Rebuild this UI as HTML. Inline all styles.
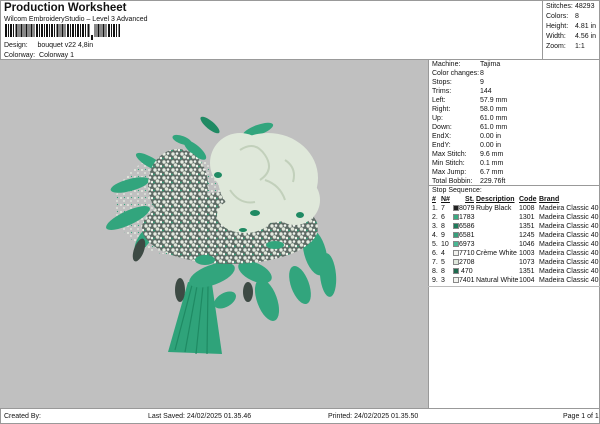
<!DOCTYPE html>
<html><head><meta charset="utf-8"><style>
*{margin:0;padding:0;box-sizing:border-box}
body{width:600px;height:424px;background:#fff;font-family:"Liberation Sans",sans-serif;font-size:7px;color:#111;position:relative;overflow:hidden}
.a{position:absolute;white-space:nowrap;line-height:8px}
.t{font-weight:bold;font-size:11.5px;line-height:13px}
.bc{position:absolute;left:5px;top:24px;width:115px;height:13px;background:repeating-linear-gradient(90deg,#111 0 2px,#fff 2px 3px,#111 3px 4px,#fff 4px 5px,#111 5px 7px,#fff 7px 8px,#111 8px 9px,#fff 9px 10.3px)}
.sw{display:inline-block;width:6px;height:6px;border:1px solid #888;vertical-align:-1px}
table{border-collapse:collapse}
td{padding:0;height:9px;line-height:9px;font-size:7px;white-space:nowrap}
</style></head><body>
<div style="position:absolute;left:0;top:0;width:600px;height:424px;border:1px solid #999"></div>
<div class="a t" style="left:4px;top:2px">Production Worksheet</div>
<div class="a" style="left:4px;top:16px">Wilcom EmbroideryStudio – Level 3 Advanced</div>
<div class="bc"></div>
<div style="position:absolute;left:90px;top:24px;width:4px;height:15px;background:#fff"></div>
<div style="position:absolute;left:91px;top:35px;width:1.5px;height:5px;background:#111"></div>
<div class="a" style="left:4px;top:42px">Design:&nbsp;&nbsp;&nbsp;&nbsp;&nbsp;bouquet v22 4,8in</div>
<div class="a" style="left:4px;top:52px">Colorway:&nbsp;&nbsp;Colorway 1</div>
<div style="position:absolute;left:542px;top:0;width:1px;height:59px;background:#999"></div>
<div class="a" style="left:546px;top:2px;line-height:10px">Stitches:<br>Colors:<br>Height:<br>Width:<br>Zoom:</div>
<div class="a" style="left:575px;top:2px;line-height:10px">48293<br>8<br>4.81 in<br>4.56 in<br>1:1</div>
<div style="position:absolute;left:0;top:59px;width:600px;height:1px;background:#999"></div>
<div style="position:absolute;left:0;top:60px;width:428px;height:348px;background:#c0c0c0"></div>
<div style="position:absolute;left:428px;top:59px;width:1px;height:349px;background:#999"></div>
<div class="a" style="left:432px;top:60px;line-height:9px">Machine:<br>Color changes:<br>Stops:<br>Trims:<br>Left:<br>Right:<br>Up:<br>Down:<br>EndX:<br>EndY:<br>Max Stitch:<br>Min Stitch:<br>Max Jump:<br>Total Bobbin:</div>
<div class="a" style="left:480px;top:60px;line-height:9px">Tajima<br>8<br>9<br>144<br>57.9 mm<br>58.0 mm<br>61.0 mm<br>61.0 mm<br>0.00 in<br>0.00 in<br>9.6 mm<br>0.1 mm<br>6.7 mm<br>229.76ft</div>
<div style="position:absolute;left:428px;top:185px;width:172px;height:1px;background:#999"></div>
<div class="a" style="left:432px;top:187px">Stop Sequence:</div>
<table style="position:absolute;left:432px;top:195px">
<tr><td style="width:9px;text-decoration:underline;font-weight:bold">#</td><td style="width:12px;text-decoration:underline;font-weight:bold">N#</td><td style="width:23px;text-align:right;padding-right:2px;text-decoration:underline;font-weight:bold">St.</td><td style="width:43px;text-decoration:underline;font-weight:bold">Description</td><td style="width:20px;text-decoration:underline;font-weight:bold">Code</td><td style="text-decoration:underline;font-weight:bold">Brand</td></tr>
<tr><td>1.</td><td>7</td><td><span class="sw" style="background:#222"></span>8079</td><td>Ruby Black</td><td>1008</td><td>Madeira Classic 40</td></tr>
<tr><td>2.</td><td>6</td><td><span class="sw" style="background:#3aaa82"></span>1783</td><td></td><td>1301</td><td>Madeira Classic 40</td></tr>
<tr><td>3.</td><td>8</td><td><span class="sw" style="background:#1e7a5a"></span>6586</td><td></td><td>1351</td><td>Madeira Classic 40</td></tr>
<tr><td>4.</td><td>9</td><td><span class="sw" style="background:#38a07c"></span>6581</td><td></td><td>1245</td><td>Madeira Classic 40</td></tr>
<tr><td>5.</td><td>10</td><td><span class="sw" style="background:#4ab894"></span>6973</td><td></td><td>1046</td><td>Madeira Classic 40</td></tr>
<tr><td>6.</td><td>4</td><td><span class="sw" style="background:#f2f2ee"></span>7710</td><td>Crème White</td><td>1003</td><td>Madeira Classic 40</td></tr>
<tr><td>7.</td><td>5</td><td><span class="sw" style="background:#dfe8dc"></span>2708</td><td></td><td>1073</td><td>Madeira Classic 40</td></tr>
<tr><td>8.</td><td>8</td><td><span class="sw" style="background:#1e6a4e"></span>&nbsp;470</td><td></td><td>1351</td><td>Madeira Classic 40</td></tr>
<tr><td>9.</td><td>3</td><td><span class="sw" style="background:#f4f4f0"></span>7401</td><td>Natural White</td><td>1004</td><td>Madeira Classic 40</td></tr>
</table>
<div style="position:absolute;left:428px;top:286px;width:172px;height:1px;background:#bbb"></div>
<div style="position:absolute;left:0;top:408px;width:600px;height:1px;background:#999"></div>
<div class="a" style="left:4px;top:413px">Created By:</div>
<div class="a" style="left:148px;top:413px">Last Saved: 24/02/2025 01.35.46</div>
<div class="a" style="left:328px;top:413px">Printed: 24/02/2025 01.35.50</div>
<div class="a" style="left:563px;top:413px">Page 1 of 1</div>
<svg style="position:absolute;left:0;top:0" width="428" height="408">
<defs>
<pattern id="sp" width="9" height="8" patternUnits="userSpaceOnUse">
<rect width="9" height="8" fill="#5e6b65"/>
<circle cx="2" cy="2" r="1.7" fill="#e6ece2"/><circle cx="6" cy="1.5" r="1.3" fill="#f0f3ee"/>
<circle cx="4.5" cy="5" r="1.8" fill="#dfe6da"/><circle cx="8" cy="6" r="1.3" fill="#eef2ea"/>
<circle cx="1" cy="6.5" r="0.9" fill="#2fa37a"/>
</pattern>
<pattern id="sp2" width="7" height="7" patternUnits="userSpaceOnUse">
<circle cx="2" cy="2" r="1" fill="#e6ece2"/><circle cx="5" cy="5" r="0.9" fill="#e6ece2"/><circle cx="5.5" cy="1.5" r="0.6" fill="#2fa37a"/>
</pattern>
</defs>
<ellipse cx="175" cy="205" rx="60" ry="50" fill="url(#sp2)"/>
<g fill="#32a57d">
<path d="M168 352 L188 282 L212 284 L222 354 Z" fill="#2fa37a"/>
<path d="M175 350 L192 285 M185 352 L197 286 M196 354 L203 286 M207 354 L208 286" stroke="#1f8a63" stroke-width="1.2"/>
<ellipse cx="128" cy="218" rx="24" ry="7" transform="rotate(-25 128 218)"/>
<ellipse cx="130" cy="185" rx="20" ry="6" transform="rotate(-15 130 185)"/>
<ellipse cx="150" cy="162" rx="16" ry="5" transform="rotate(30 150 162)"/>
<ellipse cx="145" cy="238" rx="16" ry="6" transform="rotate(-55 145 238)"/>
<ellipse cx="158" cy="225" rx="10" ry="16" transform="rotate(15 158 225)"/>
<ellipse cx="315" cy="252" rx="11" ry="24" transform="rotate(-15 315 252)"/>
<ellipse cx="328" cy="275" rx="8" ry="22" transform="rotate(-5 328 275)"/>
<ellipse cx="300" cy="285" rx="9" ry="20" transform="rotate(-20 300 285)"/>
<ellipse cx="267" cy="300" rx="10" ry="22" transform="rotate(-20 267 300)"/>
<ellipse cx="255" cy="272" rx="18" ry="9" transform="rotate(25 255 272)"/>
<ellipse cx="212" cy="275" rx="24" ry="10" transform="rotate(-20 212 275)"/>
<ellipse cx="225" cy="300" rx="12" ry="7" transform="rotate(-30 225 300)"/>
<ellipse cx="195" cy="150" rx="14" ry="5" transform="rotate(40 195 150)"/>
<ellipse cx="210" cy="125" rx="12" ry="4" transform="rotate(40 210 125)" fill="#1f8a63"/>
<ellipse cx="258" cy="130" rx="16" ry="5" transform="rotate(-20 258 130)"/>
<ellipse cx="182" cy="140" rx="10" ry="4" transform="rotate(20 182 140)"/>
</g>
<g fill="#3d4a44">
<ellipse cx="139" cy="250" rx="5" ry="12" transform="rotate(20 139 250)"/>
<ellipse cx="180" cy="290" rx="5" ry="12"/>
<ellipse cx="248" cy="292" rx="5" ry="10"/>
</g>
<ellipse cx="230" cy="228" rx="88" ry="36" fill="url(#sp)"/>
<ellipse cx="178" cy="185" rx="30" ry="36" fill="url(#sp)"/>
<g fill="#dfe8da">
<ellipse cx="268" cy="178" rx="50" ry="45"/>
<ellipse cx="240" cy="163" rx="30" ry="30"/>
<ellipse cx="295" cy="200" rx="25" ry="25"/>
<ellipse cx="245" cy="215" rx="28" ry="18"/>
</g>
<g fill="none" stroke="#c2d0bb" stroke-width="2"><path d="M240 150 q15 -10 25 5 q10 15 -5 25 M265 180 q15 5 20 20 M230 190 q10 15 25 12 M285 160 q12 8 8 22"/></g>
<g fill="#1f8a63"><ellipse cx="218" cy="175" rx="4" ry="3"/><ellipse cx="255" cy="213" rx="5" ry="3"/><ellipse cx="243" cy="230" rx="4" ry="2"/><ellipse cx="300" cy="215" rx="4" ry="3"/></g>
<g fill="#32a57d"><ellipse cx="205" cy="260" rx="10" ry="5"/><ellipse cx="275" cy="245" rx="9" ry="4"/></g>
</svg>
</body></html>
